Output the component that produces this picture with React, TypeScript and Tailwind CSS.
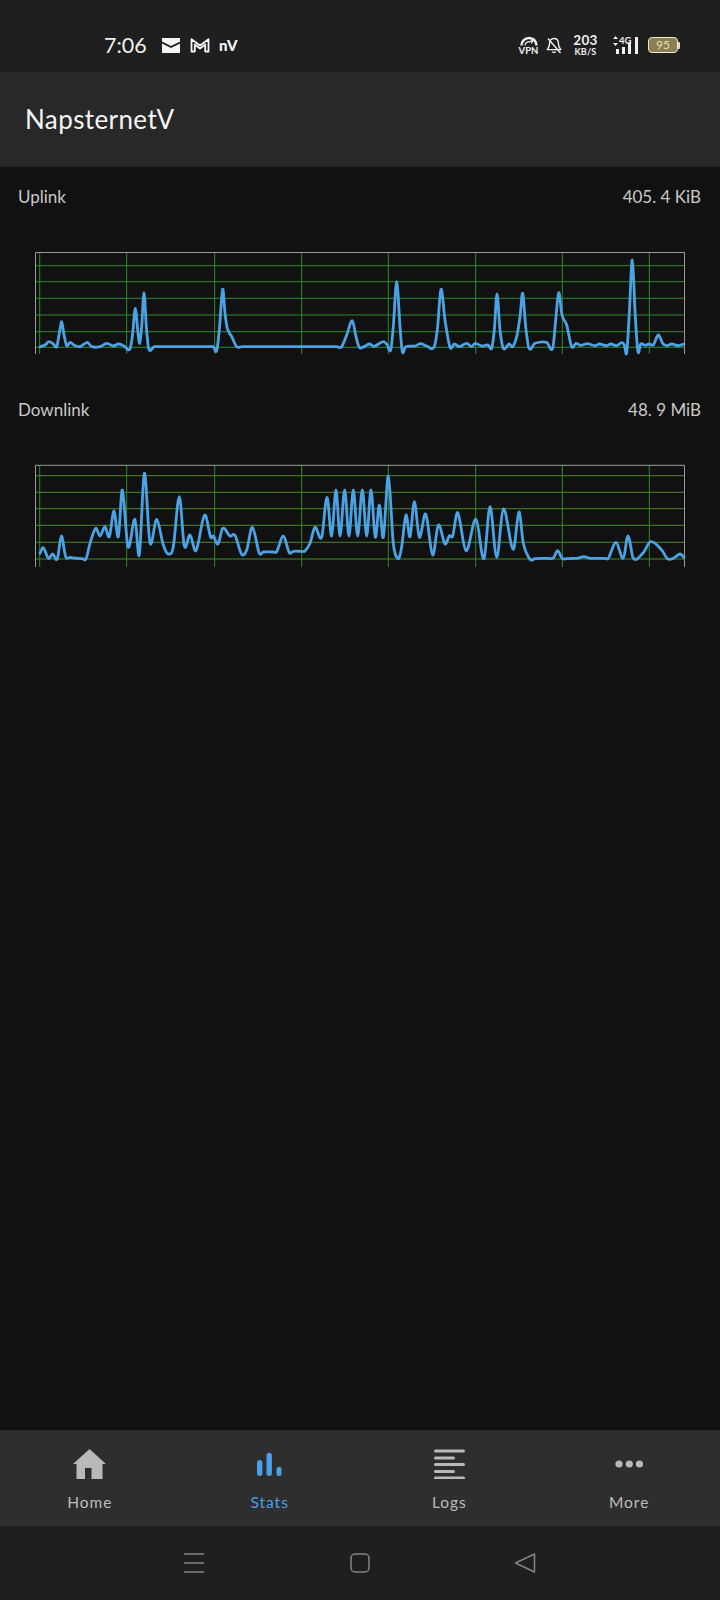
import React from "react";

type P = [number, number];

const upL: P[] = [[120,350],[135,345],[147,335],[160,342],[170,350],[178,310],[185,275],[192,315],[200,347],[210,337],[222,345],[240,350],[262,337],[275,350],[300,350],[320,340],[340,348],[355,342],[372,348],[390,357],[398,310],[406,235],[414,310],[419,340],[425,290],[432,188],[439,290],[445,350],[450,362],[462,350],[480,350],[625,350],[640,350],[650,362],[658,300],[668,178],[675,250],[682,295],[695,320],[710,350],[725,350],[1010,350],[1025,350],[1040,315],[1057,272],[1068,320],[1078,352]];
const upR: P[] = [[12,350],[28,342],[42,349],[70,335],[82,345],[92,360],[100,290],[110,155],[120,290],[127,365],[137,350],[165,348],[182,341],[200,348],[222,352],[232,300],[243,178],[255,270],[270,352],[283,342],[298,350],[320,340],[335,350],[345,340],[365,348],[385,345],[395,355],[403,300],[411,192],[420,300],[430,355],[447,342],[458,350],[470,320],[480,260],[488,190],[497,290],[507,355],[525,340],[560,337],[578,355],[587,270],[596,188],[606,255],[620,285],[635,350],[648,340],[662,346],[682,341],[705,347],[718,342],[740,347],[752,342],[770,347],[785,338],[793,345],[800,368],[808,250],[817,90],[826,260],[834,365],[842,342],[855,346],[868,342],[880,345],[895,315],[908,340],[920,347],[935,342],[955,347],[972,342]];
const downL: P[] = [[120,310],[130,293],[145,325],[158,312],[172,327],[184,258],[197,320],[210,322],[222,324],[248,326],[258,327],[270,280],[287,235],[300,258],[315,230],[328,260],[342,183],[355,260],[367,120],[384,290],[405,208],[418,315],[433,70],[450,278],[470,208],[490,285],[505,312],[520,290],[538,140],[553,288],[570,255],[588,302],[614,195],[632,262],[640,258],[654,282],[668,235],[690,258],[705,256],[725,313],[740,300],[757,232],[778,310],[790,306],[820,306],[830,305],[850,258],[868,308],[880,304],[905,304],[915,303],[930,280],[945,232],[965,262],[981,142],[995,258],[1008,120],[1020,258],[1034,120],[1047,258],[1060,120],[1073,258]];
const downR: P[] = [[7,120],[20,258],[33,120],[46,262],[58,165],[70,262],[85,78],[100,280],[115,326],[125,290],[138,195],[150,260],[163,155],[178,262],[197,192],[218,315],[235,225],[255,282],[268,258],[278,258],[293,188],[318,302],[348,208],[372,326],[390,170],[410,322],[430,177],[460,298],[477,186],[490,280],[510,328],[525,326],[565,325],[580,324],[593,302],[606,325],[620,326],[640,325],[650,325],[672,320],[690,325],[705,325],[735,325],[745,325],[768,277],[790,325],[804,258],[820,325],[850,308],[872,275],[905,300],[922,326],[940,325],[960,312],[972,322]];

function smooth(left: P[], right: P[], dy: number): string {
  const pts: P[] = [
    ...left.map(([x, y]): P => [x / 3, y / 3 + dy]),
    ...right.map(([x, y]): P => [360 + x / 3, y / 3 + dy]),
  ];
  const slope = (i: number) => {
    const a = pts[Math.max(0, i - 1)];
    const b = pts[Math.min(pts.length - 1, i + 1)];
    return (b[1] - a[1]) / (b[0] - a[0]);
  };
  let d = `M${pts[0][0].toFixed(1)} ${pts[0][1].toFixed(1)}`;
  for (let i = 0; i < pts.length - 1; i++) {
    const p1 = pts[i];
    const p2 = pts[i + 1];
    const h = (p2[0] - p1[0]) / 3;
    d += `C${(p1[0] + h).toFixed(1)} ${(p1[1] + slope(i) * h).toFixed(1)} ${(p2[0] - h).toFixed(1)} ${(p2[1] - slope(i + 1) * h).toFixed(1)} ${p2[0].toFixed(1)} ${p2[1].toFixed(1)}`;
  }
  return d;
}

const vLines = [39.7, 126.7, 214.7, 301.7, 388.3, 475.7, 562.3, 649.3];

function Chart({ hLines, top, bottom, d, green }: { hLines: number[]; top: number; bottom: number; d: string; green: string }) {
  return (
    <svg viewBox="0 0 720 151" className="block w-[720px] h-[151px]" fill="none">
      {hLines.map((y) => (
        <path key={y} d={`M36 ${y}H685`} stroke={green} strokeWidth="1" />
      ))}
      {vLines.map((x) => (
        <path key={x} d={`M${x} ${top}V${bottom}`} stroke="#2f8a2f" strokeWidth="1" />
      ))}
      <path d={`M35.5 ${top}H684.5V${bottom}M35.5 ${top}V${bottom}`} stroke="#9b9b9b" strokeWidth="1" />
      <path d={d} stroke="#4ba3e6" strokeWidth="2.8" strokeLinejoin="round" strokeLinecap="round" />
    </svg>
  );
}

function Section({ label, value, children }: { label: string; value: string; children: React.ReactNode }) {
  return (
    <section className="h-[213px]">
      <div className="flex h-[61px] items-center justify-between pb-[2px] pl-[18px] pr-[19px] text-[17px] text-[#c9c9c9]">
        <span>{label}</span>
        <span>{value}</span>
      </div>
      {children}
    </section>
  );
}

function StatusLeft() {
  return (
    <div className="flex items-center pl-[104px] text-white">
      <span className="text-[21.5px] w-[58px] text-[#f0f0f0]">7:06</span>
      <svg width="18" height="15" viewBox="0 0 18 15">
        <path d="M0 0H18V3.5L9 8 0 3.5Z M0 5.5 9 10 18 5.5V15H0Z" fill="#f5f5f5" />
      </svg>
      <svg width="20" height="16" viewBox="0 0 20 16" className="ml-[10px]" fill="none">
        <path d="M1.5 14.5V2.2L10 8.5 18.5 2.2V14.5H15.2V7.5L10 11.5 4.8 7.5V14.5Z" stroke="#f5f5f5" strokeWidth="1.8" strokeLinejoin="round" />
      </svg>
      <span className="ml-[9px] text-[15px] font-black leading-none text-[#f5f5f5] tracking-[0.5px]">nV</span>
    </div>
  );
}

function StatusRight() {
  return (
    <div className="flex items-center pr-[40px] text-[#f0f0f0]">
      <div className="flex w-[19px] flex-col items-center">
        <svg width="18" height="10" viewBox="0 0 18 10" fill="none">
          <path d="M1.5 9.5A7.5 7.5 0 0 1 16.5 9.5" stroke="#f0f0f0" strokeWidth="2.4" />
          <path d="M5 9.5A4 4 0 0 1 10 5.8L13.5 3.5 11.5 7.5" stroke="#f0f0f0" strokeWidth="1.2" />
        </svg>
        <span className="text-[9.5px] font-bold leading-[9px]">VPN</span>
      </div>
      <svg width="16" height="17" viewBox="0 0 16 17" className="ml-[8px]" fill="none" stroke="#f0f0f0" strokeWidth="1.4" strokeLinejoin="round">
        <path d="M8 1.5C5 1.5 3.6 3.8 3.6 6.5 3.6 9.5 2.6 11 1.2 12.6H14.8C13.4 11 12.4 9.5 12.4 6.5 12.4 3.8 11 1.5 8 1.5Z" />
        <path d="M6.3 14.5C7 15.8 9 15.8 9.7 14.5" />
        <path d="M2 1.5 14.5 16" />
      </svg>
      <div className="ml-[11px] flex w-[25px] flex-col items-center">
        <span className="text-[13.5px] font-bold leading-[11px] tracking-[0.3px]">203</span>
        <span className="text-[9px] font-bold leading-[9px] tracking-[0.2px] mt-[1px]">KB/S</span>
      </div>
      <div className="ml-[15px] flex h-[18px] w-[26px] items-start">
        <svg width="5" height="10" viewBox="0 0 5 10">
          <path d="M2.5 0 5 3H0Z M2.5 10 5 7H0Z" fill="#f0f0f0" />
        </svg>
        <span className="ml-[1px] text-[9.5px] font-bold leading-[10px]">4G</span>
      </div>
      <svg width="22" height="17" viewBox="0 0 22 17" className="ml-[-23px] mt-[1px]" fill="#f0f0f0">
        <rect x="0" y="12" width="3" height="5" />
        <rect x="6" y="10" width="3" height="7" />
        <rect x="12" y="5" width="3" height="12" />
        <rect x="19" y="0" width="3" height="17" />
      </svg>
      <div className="ml-[10px] flex items-center">
        <div className="flex h-[16px] w-[30px] items-center justify-center rounded-[4px] border-[1.5px] border-[#efe9cf] bg-[#8b7f55] text-[12px] leading-none text-[#e9e0a8]">95</div>
        <div className="h-[7px] w-[2px] rounded-r-[1px] bg-[#d9d9d9]" />
      </div>
    </div>
  );
}

function Home() {
  return (
    <svg width="33" height="30" viewBox="0 0 33 30" fill="#b9b9b9">
      <path d="M16.5 0 33 15H29.5V30H18.5V19H12V30H3.5V15H0Z" />
    </svg>
  );
}
function Stats() {
  return (
    <svg width="33" height="30" viewBox="0 0 33 30" fill="#4a9fe6">
      <rect x="4" y="11" width="5.4" height="16" rx="2.7" />
      <rect x="13.5" y="3.7" width="5.4" height="23.3" rx="2.7" />
      <rect x="23.5" y="17.7" width="5" height="9.3" rx="2.5" />
    </svg>
  );
}
function Logs() {
  return (
    <svg width="33" height="30" viewBox="0 0 33 30" fill="#b9b9b9">
      <rect x="1" y="0.5" width="31" height="3" rx="1.5" />
      <rect x="1" y="7.5" width="21" height="3" rx="1.5" />
      <rect x="1" y="14" width="31" height="3" rx="1.5" />
      <rect x="1" y="21" width="21" height="3" rx="1.5" />
      <rect x="1" y="27.5" width="31" height="3" rx="1.5" />
    </svg>
  );
}
function More() {
  return (
    <svg width="33" height="30" viewBox="0 0 33 30" fill="#b9b9b9">
      <circle cx="6" cy="15" r="3.6" />
      <circle cx="16.3" cy="15" r="3.6" />
      <circle cx="26.5" cy="15" r="3.6" />
    </svg>
  );
}

const nav = [
  { label: "Home", icon: <Home />, active: false },
  { label: "Stats", icon: <Stats />, active: true },
  { label: "Logs", icon: <Logs />, active: false },
  { label: "More", icon: <More />, active: false },
];

export default function App() {
  return (
    <div className="flex h-[1600px] w-[720px] flex-col overflow-hidden bg-[#111111] font-['Lato','Noto_Sans',sans-serif]">
      <header className="flex h-[72px] items-center justify-between bg-[#1f1f1f] pt-[18px]">
        <StatusLeft />
        <StatusRight />
      </header>
      <div className="flex h-[95px] items-center border-b-2 border-[#242424] bg-[#282828] pl-[25px] pt-[2px] text-[26px] text-[#f4f4f4] tracking-[0.4px]">
        NapsternetV
      </div>
      <main className="flex-1">
        <Section label="Uplink" value="405. 4 KiB">
          <Chart
            top={24.5}
            bottom={126}
            hLines={[37.7, 53.7, 70.3, 87, 103.7, 119.3]}
            green="#2f8a2f"
            d={smooth(upL, upR, 2)}
          />
        </Section>
        <Section label="Downlink" value="48. 9 MiB">
          <Chart
            top={24.3}
            bottom={126}
            hLines={[34.7, 51.3, 67.7, 84.3, 101.3, 118]}
            green="#468a2c"
            d={smooth(downL, downR, 9)}
          />
        </Section>
      </main>
      <nav className="grid h-[96px] grid-cols-4 border-t border-[#2a2a2a] bg-[#2e2e2e] pr-[1px]">
        {nav.map((n) => (
          <div key={n.label} className="flex flex-col items-center pt-[18px]">
            {n.icon}
            <span className={`mt-[13px] text-[15.5px] leading-[20px] tracking-[1px] ${n.active ? "text-[#4a9fe6]" : "text-[#bdbdbd]"}`}>
              {n.label}
            </span>
          </div>
        ))}
      </nav>
      <footer className="flex h-[74px] items-start bg-[#1f1f1f] pt-[27px] pl-[183px]">
        <svg width="22" height="20" viewBox="0 0 22 20" stroke="#858585" strokeWidth="1.5" fill="none">
          <path d="M1 1H21M1 10H21M1 19H21" />
        </svg>
        <svg width="20" height="20" viewBox="0 0 20 20" stroke="#858585" strokeWidth="1.5" fill="none" className="ml-[145px]">
          <rect x="1" y="1" width="18" height="18" rx="4" />
        </svg>
        <svg width="22" height="20" viewBox="0 0 22 20" stroke="#858585" strokeWidth="1.5" fill="none" strokeLinejoin="round" className="ml-[144px]">
          <path d="M20.5 1V19L1.5 10Z" />
        </svg>
      </footer>
    </div>
  );
}
